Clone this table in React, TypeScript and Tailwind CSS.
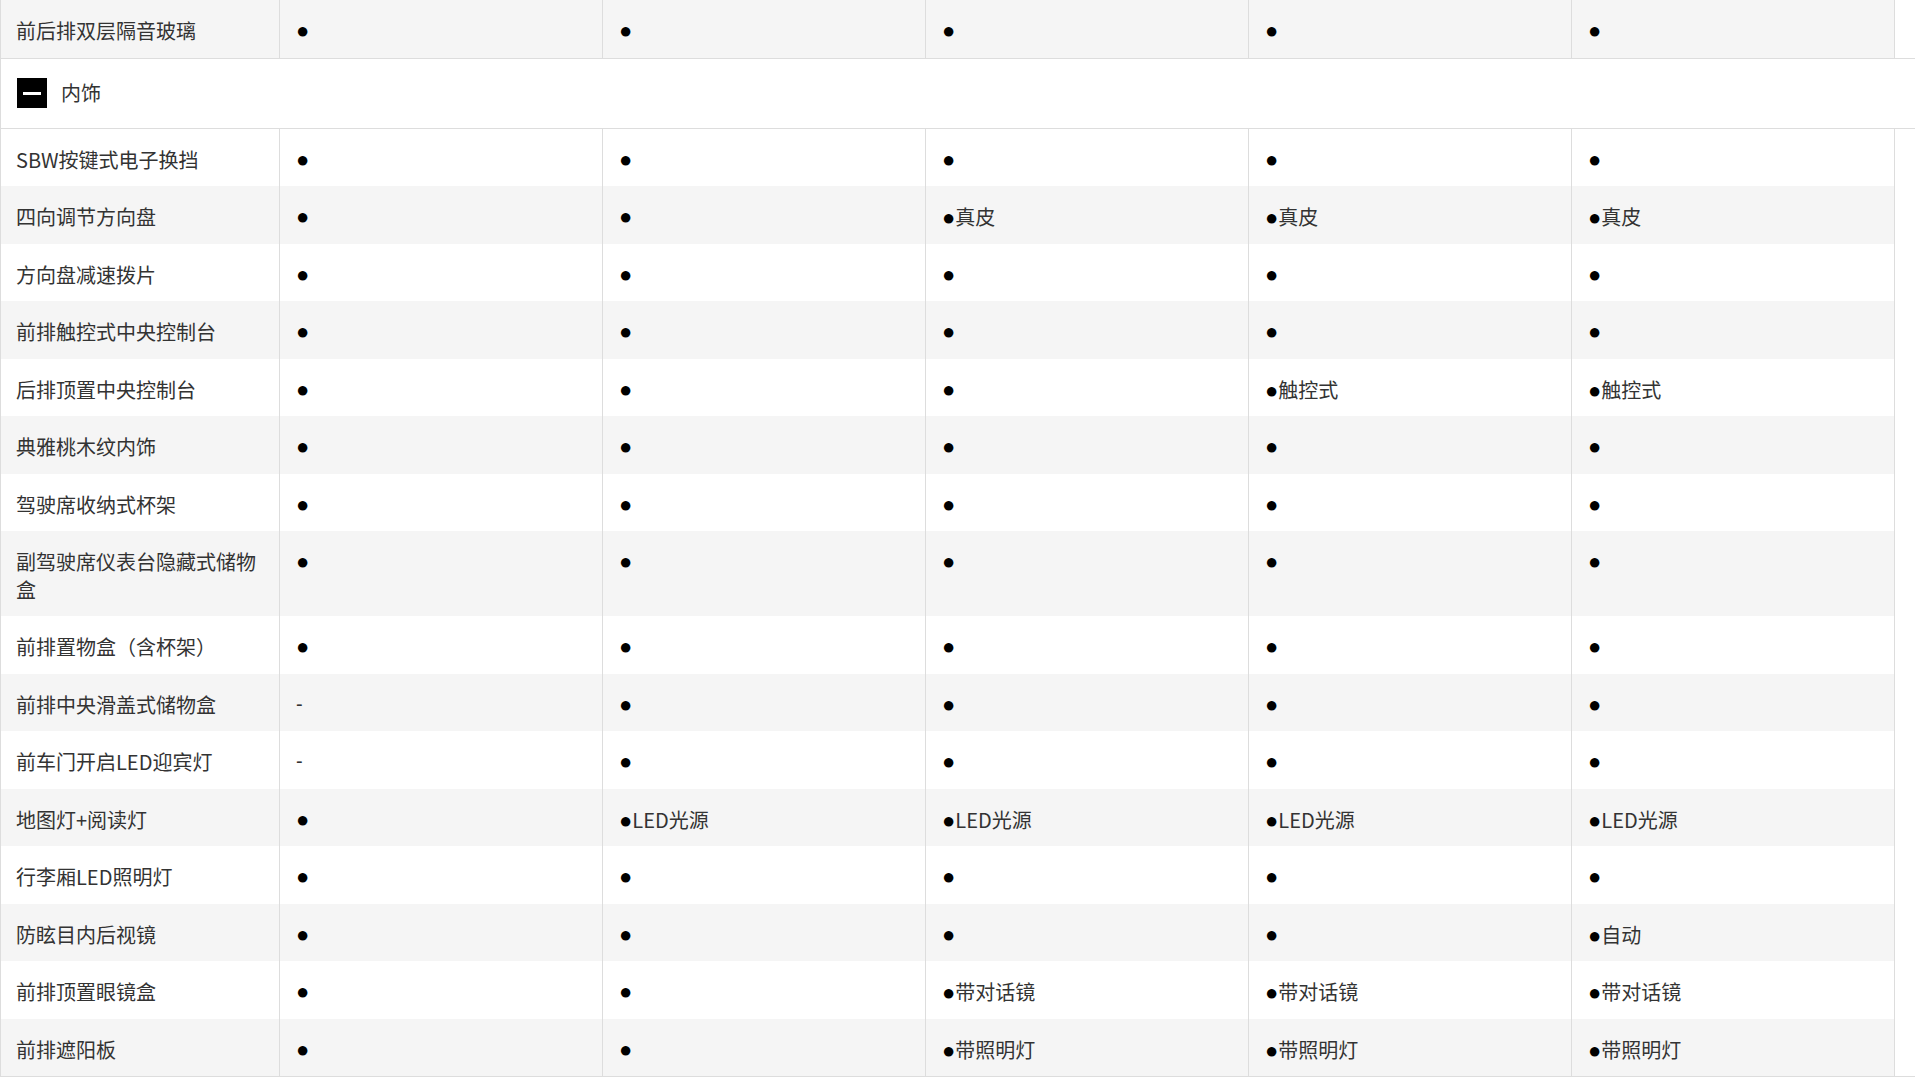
import React from 'react';

type Row = { name: string; values: string[] };

const prevRow: Row = { name: '前后排双层隔音玻璃', values: ['●', '●', '●', '●', '●'] };

const rows: Row[] = [
  { name: 'SBW按键式电子换挡', values: ['●', '●', '●', '●', '●'] },
  { name: '四向调节方向盘', values: ['●', '●', '●真皮', '●真皮', '●真皮'] },
  { name: '方向盘减速拨片', values: ['●', '●', '●', '●', '●'] },
  { name: '前排触控式中央控制台', values: ['●', '●', '●', '●', '●'] },
  { name: '后排顶置中央控制台', values: ['●', '●', '●', '●触控式', '●触控式'] },
  { name: '典雅桃木纹内饰', values: ['●', '●', '●', '●', '●'] },
  { name: '驾驶席收纳式杯架', values: ['●', '●', '●', '●', '●'] },
  { name: '副驾驶席仪表台隐藏式储物盒', values: ['●', '●', '●', '●', '●'] },
  { name: '前排置物盒（含杯架）', values: ['●', '●', '●', '●', '●'] },
  { name: '前排中央滑盖式储物盒', values: ['-', '●', '●', '●', '●'] },
  { name: '前车门开启LED迎宾灯', values: ['-', '●', '●', '●', '●'] },
  { name: '地图灯+阅读灯', values: ['●', '●LED光源', '●LED光源', '●LED光源', '●LED光源'] },
  { name: '行李厢LED照明灯', values: ['●', '●', '●', '●', '●'] },
  { name: '防眩目内后视镜', values: ['●', '●', '●', '●', '●自动'] },
  { name: '前排顶置眼镜盒', values: ['●', '●', '●带对话镜', '●带对话镜', '●带对话镜'] },
  { name: '前排遮阳板', values: ['●', '●', '●带照明灯', '●带照明灯', '●带照明灯'] },
];

const Value: React.FC<{ v: string }> = ({ v }) => {
  if (v === '-') {
    return (
      <div className="flex h-[27.5px] items-baseline">
        <span className="font-['Liberation_Sans'] text-[#333]">-</span>
      </div>
    );
  }
  const rest = v.slice(1);
  return (
    <div className="flex h-[27.5px] items-baseline">
      <span className="font-['Liberation_Sans'] text-[22px] leading-[27.5px] text-black">●</span>
      {rest && <span className="text-[#333]">{rest}</span>}
    </div>
  );
};

const SpecRow: React.FC<{ row: Row; shaded: boolean }> = ({ row, shaded }) => (
  <div
    className={
      'grid w-[1895px] grid-cols-[278px_repeat(5,1fr)] border-l border-r border-[#ddd] ' +
      (shaded ? 'bg-[#f5f5f5]' : 'bg-white')
    }
  >
    <div className="pt-[17px] pb-[13px] pl-[15px] pr-4 text-[#333]">{row.name}</div>
    {row.values.map((v, i) => (
      <div key={i} className="border-l border-[#ddd] px-4 pt-[17px] pb-[13px]">
        <Value v={v} />
      </div>
    ))}
  </div>
);

export default function App() {
  return (
    <div className="min-h-screen w-full bg-white font-['Noto_Sans_CJK_SC',sans-serif] text-[20px] leading-[27.5px]">
      <SpecRow row={prevRow} shaded />
      <div className="flex h-[71px] items-center gap-[14px] border-y border-l border-[#ddd] pl-4">
        <div className="flex h-[30px] w-[30px] items-center justify-center bg-black">
          <div className="h-[3px] w-[18px] bg-white" />
        </div>
        <span className="text-[#333]">内饰</span>
      </div>
      <div>
        {rows.map((r, i) => (
          <SpecRow key={r.name} row={r} shaded={i % 2 === 1} />
        ))}
      </div>
      <div className="border-t border-[#ddd]" />
    </div>
  );
}
